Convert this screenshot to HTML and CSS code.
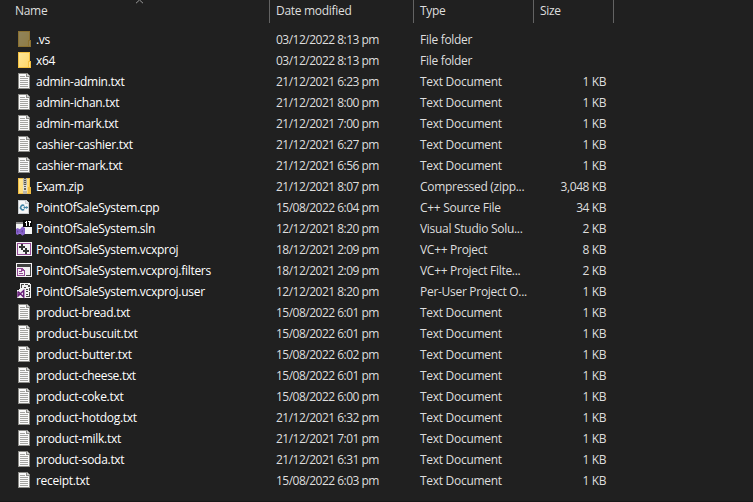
FILE: index.html
```
<!DOCTYPE html>
<html lang="en">
<head>
<meta charset="utf-8">
<title>Files</title>
<link rel="stylesheet" href="styles.css">
</head>
<body>
<svg class="sprites" aria-hidden="true">
  <defs>
    <linearGradient id="gold" x1="0" y1="0" x2="1" y2="1"><stop offset="0" stop-color="#ffe797"/><stop offset="1" stop-color="#ffd86b"/></linearGradient>
  </defs>
  <symbol id="folder" viewBox="0 0 16 16">
    <path fill="#f5c242" d="M2 0h12v9h1v7H2z"/><path fill="url(#gold)" d="M3 1h10v8h-1v6H3z"/><path fill="#ffe08a" d="M13 10h1v5h-1z"/>
  </symbol>
  <symbol id="txt" viewBox="0 0 16 16">
    <path fill="#8c8c88" d="M2 0h9l3 3v13H2z"/><path fill="#fafafa" d="M3 1h7v3h3v11H3z"/><path fill="#d5d5d5" d="M11 1l2 2h-2z"/>
    <path stroke="#a3a3a0" d="M4 3.5h5M4 5.5h8M4 7.5h8M4 9.5h8M4 11.5h8M4 13.5h8"/>
  </symbol>
  <symbol id="zip" viewBox="0 0 16 16">
    <path fill="#f0bd43" d="M2 0h12v9h1v7H2z"/><path fill="url(#gold)" d="M3 1h10v8h-1v6H3z"/>
    <path fill="#b9b6ab" d="M7 0h4v16H7z"/><path stroke="#55534d" stroke-width="2" stroke-dasharray="1 1" d="M9 0v8"/>
    <path fill="#deded9" d="M7 7h4v6H7z"/><path fill="#686761" d="M8 8h2v1H8zM8 10h2v2H8z"/>
  </symbol>
  <symbol id="cpp" viewBox="0 0 16 16">
    <path fill="#c9cdd0" d="M2 1h8l3 3v11H2z"/><path fill="#f7f7f7" d="M3 2h6v3h3v9H3z"/><path fill="#e4e7e9" d="M10 2l2 2h-2z"/>
    <path class="smooth" fill="none" stroke="#4385a6" stroke-width="1.6" d="M8.2 6.6A2.3 2.3 0 1 0 8.2 10.4"/><path class="smooth" stroke="#4385a6" d="M7.5 8.5h4.5M8.7 7.2v2.6M10.7 7.2v2.6"/>
  </symbol>
  <symbol id="sln" viewBox="0 0 16 16">
    <path fill="#f5f5f5" d="M0 2h16v12H0z"/><path fill="#8c8c8c" d="M0 2h8v2H0z"/><path fill="#080808" d="M7 0h9v7H7z"/>
    <path fill="#fff" d="M10 1h1v5h-1zM9 2h1v1H9zM12 1h3v2h-1v3h-1V2h-1z"/>
    <path class="smooth" fill="#8660c9" d="M0 9l1.500-1L4 9.300 6.300 6.500 9 8v6l-2.700 1.800L4 13.500 1.500 15 0 14z"/><path class="smooth" fill="#67479f" d="M1 10l1.500 1.500L1 13zM5 11.200l2-1.500v3z"/>
  </symbol>
  <symbol id="project" viewBox="0 0 16 16">
    <path fill="#f4f1f4" d="M0 1h16v14H0z"/><path fill="none" stroke="#944b96" d="M1.500 2.500h13v11h-13z"/>
    <path fill="#343434" d="M5 3h2v2h2v2H7v2H5V7H3V5h2zM9 7h2v2h2v2h-2v2H9v-2H7V9h2z"/>
  </symbol>
  <symbol id="filters" viewBox="0 0 16 16">
    <path fill="#f4f1f4" d="M0 1h16v14H0z"/><path fill="#414141" d="M1 2h14v3H1zM14 5h1v9h-1zM10 13h5v1h-5z"/>
    <path fill="#914894" d="M1 6h5l3 3v5H1z"/><path fill="#f4f1f4" d="M2 7h3v2h3v4H2z"/><path fill="#914894" d="M3 9h3v1H3zM3 11h4v1H3z"/>
  </symbol>
  <symbol id="user" viewBox="0 0 16 16">
    <path fill="#f2f2f2" d="M4 0h9l2 2v13H1V7l3-1z"/>
    <path fill="#464646" d="M5 1h3v1H6v3H5zM9 1h3v1H9zM12 2h2v2h-2zM13 5h1v3h-1zM13 9h1v5h-4v-1h3zM8 4h2v1H8zM10 6h2v1h-2zM10 8h2v1h-2zM10 11h2v1h-2z"/>
    <path class="smooth" fill="none" stroke="#68217a" stroke-width="1.500" d="M2 8.500v4.500L7.700 7.500v6.500L2 8.500"/>
  </symbol>
</svg>
<main class="files">
  <header class="row head"><span class="name">Name</span><span class="date">Date modified</span><span class="type">Type</span><span class="size">Size</span>
    <svg class="sort" viewBox="0 0 9 4"><path d="M1 3.2L4.500 0 8 3.2"/></svg></header>
  <div class="list">
    <div class="row"><span class="name"><svg class="icon hidden"><use href="#folder"/></svg>.vs</span><span class="date">03/12/2022 8:13 pm</span><span class="type">File folder</span><span class="size"></span></div>
    <div class="row"><span class="name"><svg class="icon"><use href="#folder"/></svg>x64</span><span class="date">03/12/2022 8:13 pm</span><span class="type">File folder</span><span class="size"></span></div>
    <div class="row"><span class="name"><svg class="icon"><use href="#txt"/></svg>admin-admin.txt</span><span class="date">21/12/2021 6:23 pm</span><span class="type">Text Document</span><span class="size">1 KB</span></div>
    <div class="row"><span class="name"><svg class="icon"><use href="#txt"/></svg>admin-ichan.txt</span><span class="date">21/12/2021 8:00 pm</span><span class="type">Text Document</span><span class="size">1 KB</span></div>
    <div class="row"><span class="name"><svg class="icon"><use href="#txt"/></svg>admin-mark.txt</span><span class="date">21/12/2021 7:00 pm</span><span class="type">Text Document</span><span class="size">1 KB</span></div>
    <div class="row"><span class="name"><svg class="icon"><use href="#txt"/></svg>cashier-cashier.txt</span><span class="date">21/12/2021 6:27 pm</span><span class="type">Text Document</span><span class="size">1 KB</span></div>
    <div class="row"><span class="name"><svg class="icon"><use href="#txt"/></svg>cashier-mark.txt</span><span class="date">21/12/2021 6:56 pm</span><span class="type">Text Document</span><span class="size">1 KB</span></div>
    <div class="row"><span class="name"><svg class="icon"><use href="#zip"/></svg>Exam.zip</span><span class="date">21/12/2021 8:07 pm</span><span class="type">Compressed (zipp...</span><span class="size">3,048 KB</span></div>
    <div class="row"><span class="name"><svg class="icon"><use href="#cpp"/></svg>PointOfSaleSystem.cpp</span><span class="date">15/08/2022 6:04 pm</span><span class="type">C++ Source File</span><span class="size">34 KB</span></div>
    <div class="row"><span class="name"><svg class="icon"><use href="#sln"/></svg>PointOfSaleSystem.sln</span><span class="date">12/12/2021 8:20 pm</span><span class="type">Visual Studio Solu...</span><span class="size">2 KB</span></div>
    <div class="row"><span class="name"><svg class="icon"><use href="#project"/></svg>PointOfSaleSystem.vcxproj</span><span class="date">18/12/2021 2:09 pm</span><span class="type">VC++ Project</span><span class="size">8 KB</span></div>
    <div class="row"><span class="name"><svg class="icon"><use href="#filters"/></svg>PointOfSaleSystem.vcxproj.filters</span><span class="date">18/12/2021 2:09 pm</span><span class="type">VC++ Project Filte...</span><span class="size">2 KB</span></div>
    <div class="row"><span class="name"><svg class="icon"><use href="#user"/></svg>PointOfSaleSystem.vcxproj.user</span><span class="date">12/12/2021 8:20 pm</span><span class="type">Per-User Project O...</span><span class="size">1 KB</span></div>
    <div class="row"><span class="name"><svg class="icon"><use href="#txt"/></svg>product-bread.txt</span><span class="date">15/08/2022 6:01 pm</span><span class="type">Text Document</span><span class="size">1 KB</span></div>
    <div class="row"><span class="name"><svg class="icon"><use href="#txt"/></svg>product-buscuit.txt</span><span class="date">15/08/2022 6:01 pm</span><span class="type">Text Document</span><span class="size">1 KB</span></div>
    <div class="row"><span class="name"><svg class="icon"><use href="#txt"/></svg>product-butter.txt</span><span class="date">15/08/2022 6:02 pm</span><span class="type">Text Document</span><span class="size">1 KB</span></div>
    <div class="row"><span class="name"><svg class="icon"><use href="#txt"/></svg>product-cheese.txt</span><span class="date">15/08/2022 6:01 pm</span><span class="type">Text Document</span><span class="size">1 KB</span></div>
    <div class="row"><span class="name"><svg class="icon"><use href="#txt"/></svg>product-coke.txt</span><span class="date">15/08/2022 6:00 pm</span><span class="type">Text Document</span><span class="size">1 KB</span></div>
    <div class="row"><span class="name"><svg class="icon"><use href="#txt"/></svg>product-hotdog.txt</span><span class="date">21/12/2021 6:32 pm</span><span class="type">Text Document</span><span class="size">1 KB</span></div>
    <div class="row"><span class="name"><svg class="icon"><use href="#txt"/></svg>product-milk.txt</span><span class="date">21/12/2021 7:01 pm</span><span class="type">Text Document</span><span class="size">1 KB</span></div>
    <div class="row"><span class="name"><svg class="icon"><use href="#txt"/></svg>product-soda.txt</span><span class="date">21/12/2021 6:31 pm</span><span class="type">Text Document</span><span class="size">1 KB</span></div>
    <div class="row"><span class="name"><svg class="icon"><use href="#txt"/></svg>receipt.txt</span><span class="date">15/08/2022 6:03 pm</span><span class="type">Text Document</span><span class="size">1 KB</span></div>
  </div>
</main>
</body>
</html>
```
FILE: styles.css
```
* { box-sizing: border-box; }
body { margin: 0; background: #202020; color: #dedede; font: 12px/21px "Open Sans", "Noto Sans", sans-serif; }
.sprites { position: absolute; width: 0; height: 0; }
.files { height: 502px; overflow: hidden; border-bottom: 1px solid #191919; }
.row { display: grid; grid-template-columns: 270px 144px 120px 80px; height: 21px; white-space: nowrap; }
.row > span { height: 21px; }
.name { display: flex; padding-left: 16px; color: #fff; letter-spacing: -0.29px; }
.date { padding-left: 6px; letter-spacing: -0.51px; }
.type { padding-left: 6px; letter-spacing: -0.29px; }
.size { padding-right: 8px; text-align: right; letter-spacing: -0.42px; }
.icon { width: 16px; height: 16px; margin: 2px 4px 0 0; flex: none; shape-rendering: crispEdges; }
.smooth { shape-rendering: auto; }
.hidden { opacity: .5; }
.head { position: relative; height: 23px; margin-bottom: 6px; }
.head > span { height: 23px; border-right: 1px solid #636363; color: #dedede; letter-spacing: -0.3px; }
.head .name { padding-left: 15px; }
.head .size { padding: 0 0 0 6px; text-align: left; }
.sort { position: absolute; left: 135px; top: 0; width: 9px; height: 4px; fill: none; stroke: #999; }
```
